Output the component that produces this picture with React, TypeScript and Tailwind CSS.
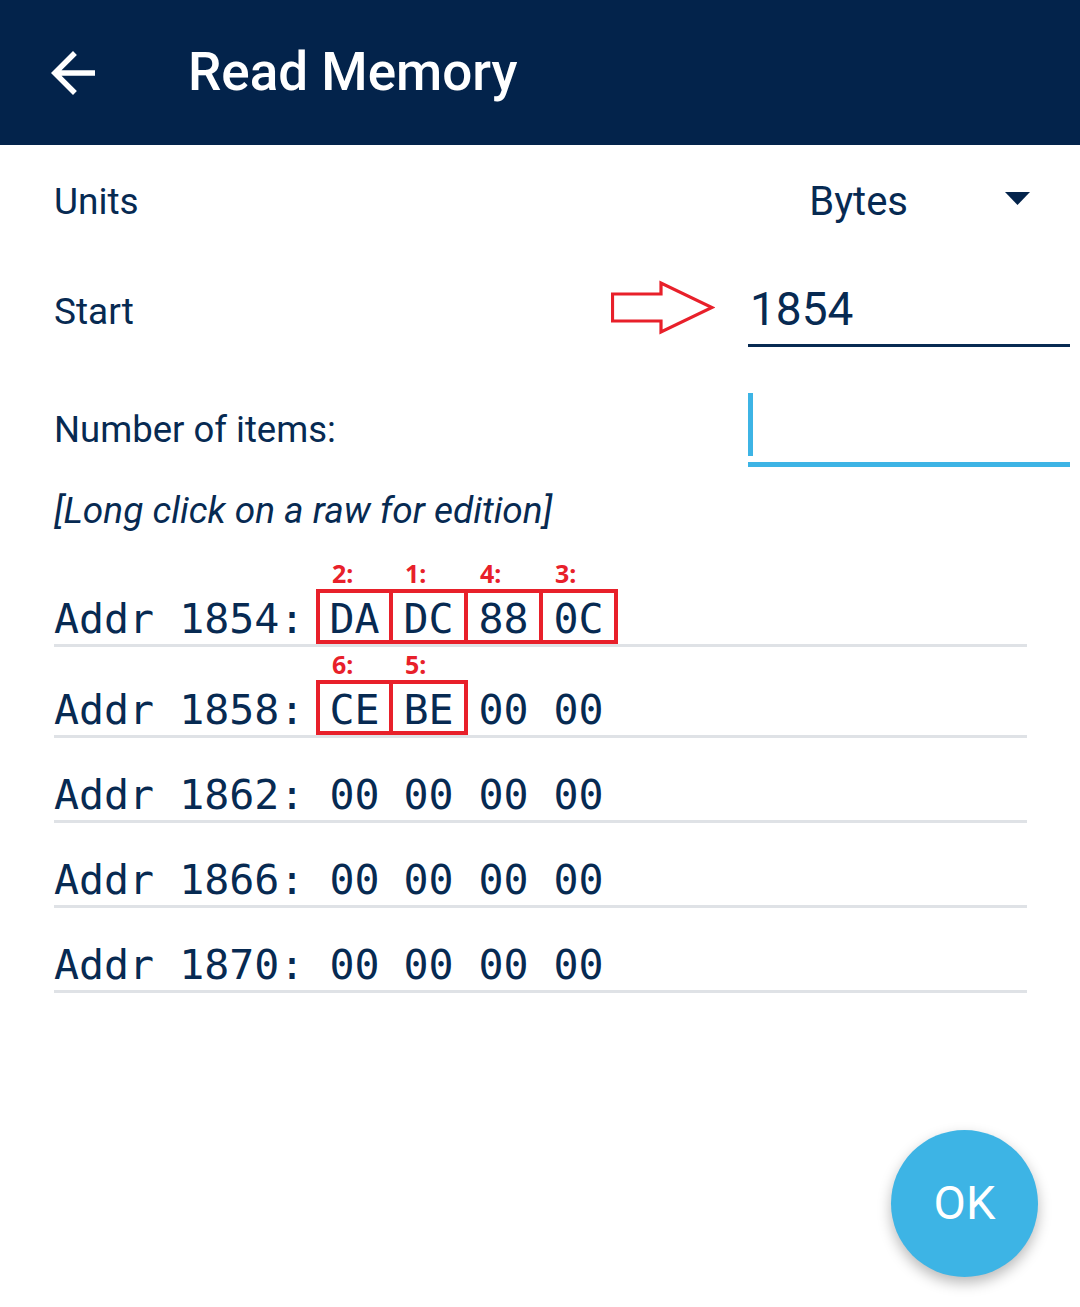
const rows = [
  { addr: "1854", bytes: ["DA", "DC", "88", "0C"], marks: ["2:", "1:", "4:", "3:"] },
  { addr: "1858", bytes: ["CE", "BE", "00", "00"], marks: ["6:", "5:", "", ""] },
  { addr: "1862", bytes: ["00", "00", "00", "00"], marks: ["", "", "", ""] },
  { addr: "1866", bytes: ["00", "00", "00", "00"], marks: ["", "", "", ""] },
  { addr: "1870", bytes: ["00", "00", "00", "00"], marks: ["", "", "", ""] },
];

function ByteCell({ value, mark, index }: { value: string; mark: string; index: number }) {
  const boxed = mark !== "";
  const first = index === 0;
  return (
    <div
      className={`relative flex h-full items-center justify-center border-y-4 border-r-4 ${
        first ? "w-[77px] border-l-4" : "w-[75px]"
      } ${boxed ? "border-[#e8202a]" : "border-transparent"}`}
    >
      {boxed && (
        <span className="absolute left-[12px] top-[-32px] text-[25px] font-bold leading-[24px] text-[#e8202a] [font-family:'Noto_Sans',sans-serif]">
          {mark}
        </span>
      )}
      <span className="pt-[4px] leading-none">{value}</span>
    </div>
  );
}

export default function App() {
  return (
    <div className="relative min-h-[1307px] bg-white text-[#072a52] [font-family:Roboto,'Noto_Sans',sans-serif]">
      {/* app bar */}
      <header className="flex h-[145px] items-center bg-[#03234b] text-white">
        <svg viewBox="0 0 24 24" className="ml-[40px] h-[66px] w-[66px] fill-white">
          <path d="M20 11H7.83l5.59-5.59L12 4l-8 8 8 8 1.41-1.41L7.83 13H20v-2z" />
        </svg>
        <h1 className="ml-[82px] text-[53px] font-medium leading-none">Read Memory</h1>
      </header>

      <div className="pl-[54px] text-[37px]">
        <div className="flex h-[114px] items-center">
          <span>Units</span>
          <div className="ml-auto flex items-center">
            <span className="text-[40px]">Bytes</span>
            <svg viewBox="0 0 25 13" className="mb-[8px] ml-[97px] mr-[50px] h-[13px] w-[25px] fill-[#03234b]">
              <path d="M0 0h25L12.5 13z" />
            </svg>
          </div>
        </div>

        <div className="flex h-[105px] items-center">
          <span>Start</span>
          <svg viewBox="0 0 104 56" className="mb-[8px] ml-auto mr-[33px] h-[56px] w-[104px]">
            <path
              d="M1.5 14H50V3L101 27.5L50 52V41H1.5z"
              fill="none"
              stroke="#e8202a"
              strokeWidth="3.2"
              strokeLinejoin="miter"
            />
          </svg>
          <div className="mr-[10px] flex h-[70px] w-[322px] items-end border-b-[3px] border-[#072a52] pb-[8px] pl-[2px]">
            <span className="text-[46px] leading-[54px]">1854</span>
          </div>
        </div>

        <div className="flex h-[132px] items-center">
          <span className="text-[36.5px]">Number of items:</span>
          <div className="ml-auto mr-[10px] flex w-[322px] flex-col">
            <div className="h-[63px] w-[5px] bg-[#3db4e5]" />
            <div className="mt-[6px] h-[5px] w-full bg-[#3db4e5]" />
          </div>
        </div>

        <p className="-mt-[3px] text-[37px] italic leading-[36px]">[Long click on a raw for edition]</p>

        <div className="mt-[60px] w-[973px] text-[41.6px] [font-family:'DejaVu_Sans_Mono',monospace]">
          {rows.map((r, ri) => (
            <div key={r.addr} className={ri === 0 ? "" : ri === 1 ? "mt-[33px]" : "mt-[27px]"}>
              <div className="flex h-[55px] items-center">
                <span className="w-[250px] whitespace-pre pt-[4px] leading-none">Addr {r.addr}:</span>
                <div className="ml-[12px] flex h-full">
                  {r.bytes.map((b, i) => (
                    <ByteCell key={i} value={b} mark={r.marks[i]} index={i} />
                  ))}
                </div>
              </div>
              <div className="h-[3px] bg-[#dfe2e6]" />
            </div>
          ))}
        </div>
      </div>

      <button className="absolute bottom-[30px] right-[42px] flex h-[147px] w-[147px] items-center justify-center rounded-full bg-[#3db4e5] text-[47px] text-white shadow-[0_6px_14px_rgba(0,0,0,0.28)]">
        OK
      </button>
    </div>
  );
}
